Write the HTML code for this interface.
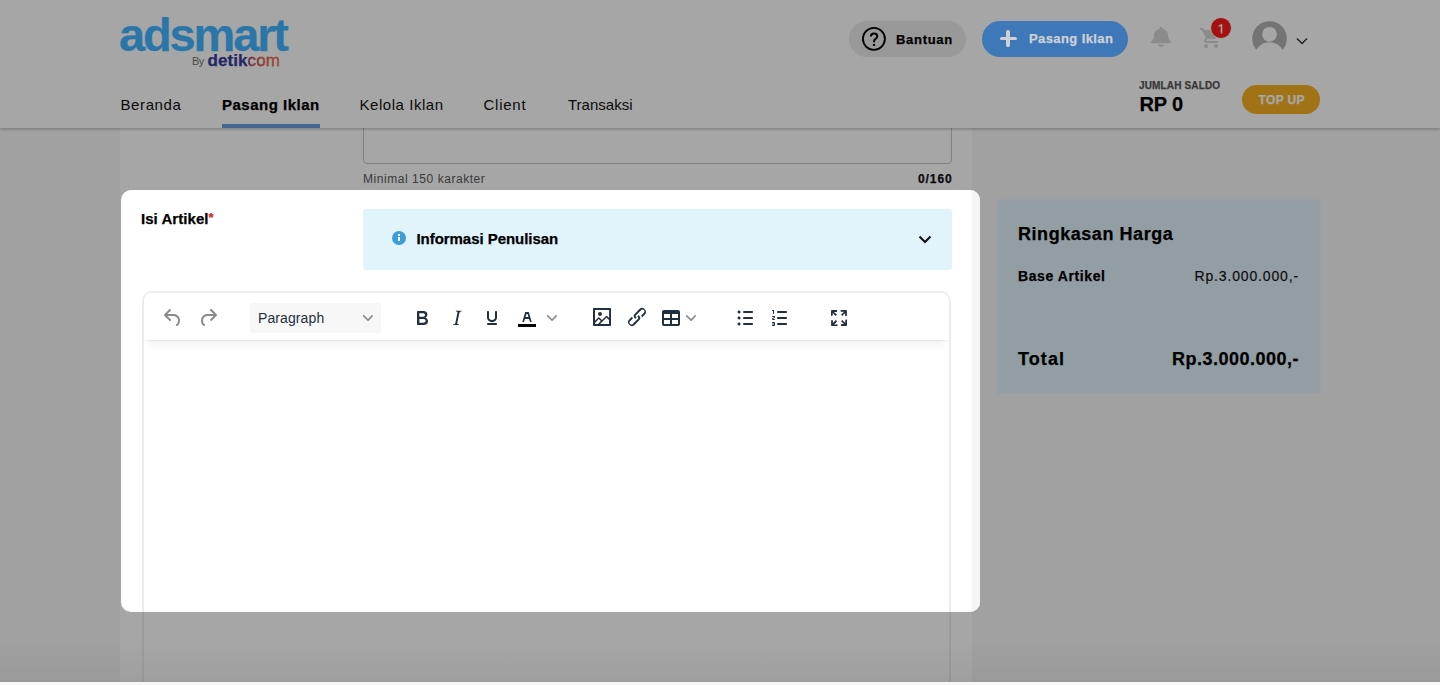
<!DOCTYPE html>
<html><head><meta charset="utf-8">
<style>
*{box-sizing:border-box;margin:0;padding:0}
html,body{width:1440px;height:685px;overflow:hidden}
body{background:#f7f7f7;font-family:"Liberation Sans",sans-serif;color:#000;position:relative}
.a{position:absolute;white-space:nowrap}
.t{position:absolute;white-space:nowrap;line-height:1}
.t[style*="font-weight:700"]{-webkit-text-stroke:.25px currentColor}
#header{position:absolute;left:0;top:0;width:1440px;height:128px;background:#fff;box-shadow:0 1.5px 2px rgba(0,0,0,.18);z-index:2}
#card{position:absolute;left:120px;top:128px;width:852px;height:557px;background:#fff}
#overlay{position:absolute;left:0;top:0;width:1440px;height:682px;background:rgba(0,0,0,.35);z-index:10}
#spot{position:absolute;left:121px;top:190px;width:859px;height:422px;border-radius:10px;overflow:hidden;background:#fff;z-index:11}
#footer{position:absolute;left:0;top:682px;width:1440px;height:3px;background:#f7f7f7;z-index:12}
svg{position:absolute;overflow:visible}
</style></head><body>

<div id="card">
  <div class="a" style="left:243px;top:-40px;width:589px;height:76px;border:1px solid #c7c7c7;border-radius:4px"></div>
  <div class="t" style="left:243px;top:44.7px;font-size:12px;color:#5a5a5a;letter-spacing:.55px">Minimal 150 karakter</div>
  <div class="t" style="left:798px;top:44.8px;font-size:12px;font-weight:700;color:#111;letter-spacing:.9px">0/160</div>
  <!-- editor part under overlay -->
  <div class="a" style="left:21.5px;top:163px;width:809px;height:600px;border:2px solid #efefef;border-radius:10px"></div>
</div>

<div id="header">
  <!-- Bantuan -->
  <div class="a" style="left:849px;top:21px;width:117px;height:36px;border-radius:18px;background:#ececec"></div>
  <svg style="left:862px;top:27px" width="24" height="24" viewBox="0 0 24 24"><circle cx="11.9" cy="11.85" r="11" fill="none" stroke="#000" stroke-width="1.9"/><path d="M8.9 9.6C8.9 7.7 10.3 6.4 12 6.4c1.8 0 3.3 1.2 3.3 2.9 0 1.5-1 2.2-2 2.8-.8.5-1.2.9-1.2 2.1v1" fill="none" stroke="#000" stroke-width="2"/><rect x="10.9" y="16.9" width="2.2" height="2" fill="#000"/></svg>
  <div class="t" style="left:896px;top:32.5px;font-size:13px;font-weight:700;letter-spacing:.7px">Bantuan</div>

  <!-- bell -->
  <svg style="left:1151px;top:27px" width="20" height="20" viewBox="0 0 448 512" preserveAspectRatio="none"><path fill="#d6d6d6" d="M224 512c35.3 0 64-28.7 64-64H160c0 35.3 28.7 64 64 64zm215.4-149.7c-19.3-20.8-55.5-52-55.5-154.3 0-77.7-54.5-139.900-127.9-155.2V32c0-17.7-14.3-32-32-32s-32 14.3-32 32v20.8C118.6 68.1 64.1 130.3 64.1 208c0 102.3-36.2 133.5-55.5 154.3-6 6.5-8.6 14.2-8.6 21.7.1 16.4 13 32 32.1 32h383.8c19.100 0 32-15.6 32.1-32 .1-7.5-2.6-15.3-8.6-21.7z"/></svg>
  <!-- cart -->
  <svg style="left:1199px;top:26px" width="24" height="24" viewBox="0 0 24 24"><path fill="#d6d6d6" d="M7 18c-1.1 0-1.99.9-1.99 2S5.9 22 7 22s2-.9 2-2-.9-2-2-2zM1 2v2h2l3.6 7.59-1.35 2.45c-.16.28-.25.61-.25.96 0 1.1.9 2 2 2h12v-2H7.42c-.14 0-.25-.11-.25-.25l.03-.12.9-1.63h7.45c.75 0 1.41-.41 1.75-1.03l3.58-6.49A1.003 1.003 0 0 0 20 4H5.21l-.94-2H1zm16 16c-1.1 0-1.99.9-1.99 2s.89 2 1.99 2 2-.9 2-2-.9-2-2-2z"/></svg>
  <div class="a" style="left:1210px;top:17.3px;width:22px;height:22px;border-radius:50%;background:#fb1b1b;border:1.3px solid #fff"></div>
  <svg style="left:1218px;top:23.8px" width="6" height="10" viewBox="0 0 6 10"><path d="M.6 1.6 3 .3h1.3v9.2H2.7V2.1L.6 3.1z" fill="#fff"/></svg>
  <!-- avatar -->
  <svg style="left:1251.5px;top:21.3px" width="36" height="36" viewBox="0 0 36 36">
    <circle cx="17.5" cy="17.6" r="17.3" fill="#b2b2b2"/>
    <circle cx="17.5" cy="13.3" r="7.4" fill="#fff"/><circle cx="17.5" cy="36.6" r="15.3" fill="#fff"/>
  </svg>
  <svg style="left:1296px;top:37px" width="12" height="8" viewBox="0 0 12 8"><path d="M1 1.5l5 5 5-5" fill="none" stroke="#333" stroke-width="1.5"/></svg>

  <!-- nav -->
  <div class="t" style="left:120.5px;top:96.6px;font-size:15px;color:#111;letter-spacing:.6px">Beranda</div>
  <div class="t" style="left:222px;top:96.6px;font-size:15px;font-weight:700;color:#000;letter-spacing:.5px">Pasang Iklan</div>
  <div class="t" style="left:359.5px;top:96.6px;font-size:15px;color:#111;letter-spacing:.55px">Kelola Iklan</div>
  <div class="t" style="left:483.5px;top:96.6px;font-size:15px;color:#111;letter-spacing:.75px">Client</div>
  <div class="t" style="left:568px;top:96.6px;font-size:15px;color:#111;letter-spacing:0px">Transaksi</div>
  <div class="a" style="left:222px;top:124px;width:98px;height:4px;background:#6aa0e0"></div>

  <!-- saldo -->
  <div class="t" style="left:1139px;top:80.8px;font-size:10px;font-weight:700;color:#555;letter-spacing:.15px">JUMLAH SALDO</div>
  <div class="t" style="left:1139.5px;top:94.3px;font-size:20px;font-weight:700;color:#000;letter-spacing:-.2px">RP 0</div>
  <div class="a" style="left:1242px;top:85px;width:78px;height:29px;border-radius:15px;background:#f9b023"></div>
  <div class="t" style="left:1258.5px;top:94px;font-size:12px;font-weight:700;color:#fff;letter-spacing:.35px">TOP UP</div>
</div>

<!-- ringkasan -->
<div class="a" style="left:997px;top:200px;width:323px;height:193px;background:#e0f2fc;filter:blur(1.5px)"></div>
<div class="t" style="left:1018px;top:224.6px;font-size:18px;font-weight:700;color:#000;letter-spacing:.55px">Ringkasan Harga</div>
<div class="t" style="left:1018px;top:269px;font-size:14px;font-weight:700;color:#000;letter-spacing:.6px">Base Artikel</div>
<div class="t" style="right:141px;top:269px;font-size:14px;color:#111;-webkit-text-stroke:.15px #111;letter-spacing:.85px">Rp.3.000.000,-</div>
<div class="t" style="left:1018px;top:349.6px;font-size:18px;font-weight:700;color:#000;letter-spacing:1.1px">Total</div>
<div class="t" style="right:141px;top:349.6px;font-size:18px;font-weight:700;color:#000;letter-spacing:.5px">Rp.3.000.000,-</div>

<div class="a" style="left:0;top:640px;width:1440px;height:42px;background:linear-gradient(rgba(0,0,0,0),rgba(0,0,0,.045));z-index:9"></div>
<div id="overlay"></div>
<div id="top" style="position:absolute;left:0;top:0;width:1440px;height:130px;z-index:11">
  <div class="t" style="left:119px;top:11px;font-size:47px;font-weight:700;color:#2b76a9;letter-spacing:-2.15px">adsmart</div>
  <div class="t" style="left:192px;top:56px;font-size:11px;color:#4a4a4a;letter-spacing:-.5px">By</div>
  <div class="t" style="left:207.5px;top:51.6px;font-size:17px;font-weight:700;color:#1f2766;letter-spacing:.05px">detik</div>
  <div class="t" style="left:247.5px;top:51.6px;font-size:17px;letter-spacing:.2px;-webkit-text-stroke:.3px #8a3c3c;background:linear-gradient(90deg,#5a2650,#9a4436 50%,#a85034);-webkit-background-clip:text;background-clip:text;color:transparent">com</div>
  <div class="a" style="left:982px;top:21px;width:146px;height:36px;border-radius:18px;background:#3f78b8"></div>
  <div class="a" style="left:999.5px;top:36.8px;width:17.5px;height:3.6px;border-radius:1.8px;background:#cfd0d6"></div>
  <div class="a" style="left:1006.4px;top:30px;width:3.6px;height:17px;border-radius:1.8px;background:#cfd0d6"></div>
  <div class="t" style="left:1029px;top:32.3px;font-size:13px;font-weight:700;color:#cfd0d6;letter-spacing:.4px">Pasang Iklan</div>
</div>


<div id="spot">
  <div class="a" style="left:851px;top:0;width:8px;height:422px;background:#f5f5f5"></div>
  <div class="t" style="left:20px;top:20.5px;font-size:15px;font-weight:700;color:#000;letter-spacing:.05px">Isi Artikel</div><div class="t" style="left:87.5px;top:21px;font-size:13px;font-weight:700;color:#e0262a">*</div>
  <!-- info box -->
  <div class="a" style="left:242px;top:19px;width:589px;height:61px;background:#e1f3fb;border-radius:3px"></div>
  <div class="a" style="left:270.8px;top:41.2px;width:14px;height:14px;border-radius:50%;background:#3d9dd6"></div>
  <div class="a" style="left:277.1px;top:46.6px;width:1.7px;height:4.6px;background:#fff"></div>
  <div class="a" style="left:277.1px;top:44.4px;width:1.7px;height:1.4px;background:#fff"></div>
  <div class="t" style="left:295.5px;top:41.2px;font-size:15px;font-weight:700;color:#000;letter-spacing:-.05px">Informasi Penulisan</div>
  <svg style="left:797px;top:45px" width="14" height="9" viewBox="0 0 14 9"><path d="M1.5 1.5l5.5 5.5 5.5-5.5" fill="none" stroke="#111" stroke-width="2"/></svg>

  <!-- editor -->
  <div class="a" style="left:20.5px;top:101px;width:809px;height:400px;border:2px solid #ececec;border-radius:10px"></div>
  <div class="a" style="left:22.5px;top:103px;width:805px;height:47px;background:#fff;border-radius:8px 8px 0 0;box-shadow:0 2px 2px -2px rgba(34,47,62,.2),0 8px 8px -4px rgba(34,47,62,.07)"></div>

  <div class="a" style="left:-121px;top:-190px;width:1440px;height:685px">
    <svg style="left:161px;top:305.5px" width="24" height="24" viewBox="0 0 24 24"><path fill="#8a8a8a" d="M6.4 8H12c3.7 0 6.2 2 6.8 5.1.6 2.7-.4 5.6-2.3 6.8a1 1 0 0 1-1-1.8c1.1-.6 1.8-2.7 1.4-4.6-.5-2.1-2.1-3.5-4.9-3.5H6.4l3.3 3.3a1 1 0 1 1-1.4 1.4l-5-5a1 1 0 0 1 0-1.4l5-5a1 1 0 0 1 1.4 1.4L6.4 8Z"/></svg>
    <svg style="left:196px;top:305.5px" width="24" height="24" viewBox="0 0 24 24"><path fill="#8a8a8a" d="M17.6 10H12c-2.8 0-4.4 1.4-4.9 3.5-.4 2 .3 4 1.4 4.6a1 1 0 1 1-1 1.8c-2-1.2-2.9-4.1-2.3-6.8.6-3 3-5.1 6.8-5.1h5.6l-3.3-3.3a1 1 0 1 1 1.4-1.4l5 5a1 1 0 0 1 0 1.4l-5 5a1 1 0 0 1-1.4-1.4l3.3-3.3Z"/></svg>
    <div class="a" style="left:250px;top:303px;width:131px;height:30px;background:#f7f7f7;border-radius:3px"></div>
    <div class="t" style="left:258px;top:311px;font-size:14px;color:#222f3e;letter-spacing:.1px">Paragraph</div>
    <svg style="left:363px;top:313px" width="10" height="10" viewBox="0 0 10 10"><path fill="#8a8a8a" d="M8.7 2.2c.3-.3.8-.3 1 0 .4.4.4.9 0 1.2L5.7 7.8c-.3.3-.9.3-1.2 0L.2 3.4a.8.8 0 0 1 0-1.2c.3-.3.8-.3 1.1 0L5 6l3.7-3.8Z"/></svg>
    <svg style="left:410px;top:305.6px" width="24" height="24" viewBox="0 0 24 24"><path fill="#222f3e" d="M7.8 19c-.3 0-.5 0-.6-.2l-.2-.5V5.7c0-.2 0-.4.2-.5l.6-.2h5c1.5 0 2.7.3 3.5 1 .7.6 1.1 1.4 1.1 2.5a3 3 0 0 1-.6 1.9c-.4.6-1 1-1.6 1.2.4.1.9.3 1.300.6s.8.7 1 1.2c.4.4.5 1 .5 1.6 0 1.3-.4 2.3-1.3 3-.8.7-2.1 1-3.8 1H7.8Zm5-8.3c.6 0 1.2-.1 1.6-.5.4-.3.6-.7.6-1.3 0-1.1-.8-1.7-2.3-1.7H9.3v3.5h3.4Zm.5 6c.7 0 1.3-.1 1.700-.4.4-.4.6-.9.6-1.5s-.2-1-.7-1.4c-.4-.3-1-.4-2-.4H9.4v3.8h4Z"/></svg>
    <svg style="left:445px;top:305.6px" width="24" height="24" viewBox="0 0 24 24"><path fill="#222f3e" d="m16.7 4.7-.1.9h-.3c-.6 0-1 0-1.4.3-.3.3-.4.6-.5 1.100l-2.1 9.8v.6c0 .5.4.8 1.4.8h.2l-.2.8H8l.2-.8h.2c1.1 0 1.8-.5 2-1.5l2-9.8.1-.5c0-.6-.4-.8-1.4-.8h-.3l.2-.9h5.8Z"/></svg>
    <svg style="left:480px;top:305.6px" width="24" height="24" viewBox="0 0 24 24"><path fill="#222f3e" d="M16 5c.6 0 1 .4 1 1v5.5a4 4 0 0 1-.4 1.8l-1 1.4a5.3 5.3 0 0 1-5.5 1 5 5 0 0 1-1.6-1c-.5-.4-.8-.9-1.1-1.4a4 4 0 0 1-.4-1.8V6c0-.6.4-1 1-1s1 .4 1 1v5.5c0 .3 0 .6.2 1l.6.7a3.3 3.3 0 0 0 2.2.8 3.4 3.4 0 0 0 2.2-.8c.3-.2.4-.5.6-.8l.2-.9V6c0-.6.4-1 1-1ZM8 17h8c.6 0 1 .4 1 1s-.4 1-1 1H8a1 1 0 0 1 0-2Z"/></svg>
    <svg style="left:515px;top:305.5px" width="24" height="24" viewBox="0 0 24 24"><path fill="#000" d="M3 18h18v3H3z"/><path fill="#222f3e" d="M8.7 16h-.8a.5.5 0 0 1-.5-.6l2.7-9c.1-.3.3-.4.5-.4h2.8c.2 0 .4.1.5.4l2.7 9a.5.5 0 0 1-.5.6h-.8a.5.5 0 0 1-.4-.4l-.7-2.2c0-.3-.3-.4-.5-.4h-3.400c-.2 0-.4.1-.5.4l-.7 2.2c0 .3-.2.4-.4.4Zm2.6-7.6-.6 2a.5.5 0 0 0 .5.6h1.6a.5.5 0 0 0 .5-.6l-.6-2c0-.3-.3-.4-.5-.4h-.4c-.2 0-.4.1-.5.4Z"/></svg>
    <svg style="left:547px;top:313px" width="10" height="10" viewBox="0 0 10 10"><path fill="#8a8a8a" d="M8.7 2.2c.3-.3.8-.3 1 0 .4.4.4.9 0 1.2L5.7 7.8c-.3.3-.9.3-1.2 0L.2 3.4a.8.8 0 0 1 0-1.2c.3-.3.8-.3 1.1 0L5 6l3.7-3.8Z"/></svg>
    <svg style="left:590px;top:305.2px" width="24" height="24" viewBox="0 0 24 24"><path fill="#222f3e" d="M5 15.7l3.3-3.2c.3-.3.7-.3 1 0L12 15l4.1-4c.3-.4.8-.4 1 0l2 1.9V5H5v10.7zM5 18V19h3l2.8-2.9-2-2L5 17.9zm14-3l-2.5-2.4-6.4 6.5H19v-4zM4 3h16c.6 0 1 .4 1 1v16c0 .6-.4 1-1 1H4a1 1 0 0 1-1-1V4c0-.6.4-1 1-1zm6 8a2 2 0 1 1 0-4 2 2 0 0 1 0 4z"/></svg>
    <svg style="left:625px;top:305.3px" width="24" height="24" viewBox="0 0 24 24"><path fill="#222f3e" d="M6.2 12.3a1 1 0 0 1 1.4 1.4l-2 2a2 2 0 1 0 2.6 2.8l4.8-4.8a1 1 0 0 0 0-1.4 1 1 0 1 1 1.4-1.3 2.9 2.9 0 0 1 0 4L9.6 20a3.900 3.900 0 0 1-5.5-5.5l2-2zm11.6-.6a1 1 0 0 1-1.4-1.4l2-2a2 2 0 1 0-2.6-2.800L11 10.3a1 1 0 0 0 0 1.4A1 1 0 1 1 9.6 13a2.9 2.9 0 0 1 0-4L14.4 4a3.9 3.9 0 0 1 5.5 5.5l-2 2z"/></svg>
    <svg style="left:659px;top:305.5px" width="24" height="24" viewBox="0 0 24 24"><path fill="#222f3e" d="M19 4a2 2 0 0 1 2 2v12a2 2 0 0 1-2 2H5a2 2 0 0 1-2-2V6c0-1.1.9-2 2-2h14Zm0 10h-6v4h6v-4Zm-8 0H5v4h6v-4Zm8-6h-6v4h6V8Zm-8 0H5v4h6V8Z"/></svg>
    <svg style="left:686px;top:313px" width="10" height="10" viewBox="0 0 10 10"><path fill="#8a8a8a" d="M8.7 2.2c.3-.3.8-.3 1 0 .4.4.4.9 0 1.2L5.7 7.8c-.3.3-.9.3-1.2 0L.2 3.4a.8.8 0 0 1 0-1.2c.3-.3.8-.3 1.1 0L5 6l3.7-3.8Z"/></svg>
    <svg style="left:733px;top:305.6px" width="24" height="24" viewBox="0 0 24 24"><path fill="#222f3e" d="M11 5h8c.6 0 1 .4 1 1s-.4 1-1 1h-8a1 1 0 0 1 0-2zm0 6h8c.6 0 1 .4 1 1s-.4 1-1 1h-8a1 1 0 0 1 0-2zm0 6h8c.6 0 1 .4 1 1s-.4 1-1 1h-8a1 1 0 0 1 0-2zM4.5 6c0-.4.1-.8.4-1 .3-.4.7-.5 1.1-.5.4 0 .8.1 1 .4.4.3.5.7.5 1.1 0 .4-.1.8-.4 1-.3.4-.7.5-1.1.5-.4 0-.8-.1-1-.4-.4-.3-.5-.7-.5-1.1zm0 6c0-.4.1-.8.4-1 .3-.4.7-.5 1.1-.5.4 0 .8.1 1 .4.4.3.5.7.5 1.1 0 .4-.1.8-.4 1-.3.4-.7.5-1.1.5-.4 0-.8-.1-1-.4-.4-.3-.5-.7-.5-1.1zm0 6c0-.4.1-.8.4-1 .3-.4.7-.5 1.1-.5.4 0 .8.1 1 .4.4.3.5.7.5 1.1 0 .4-.1.8-.4 1-.3.4-.7.5-1.1.5-.4 0-.8-.1-1-.4-.4-.3-.5-.7-.5-1.100z"/></svg>
    <svg style="left:768px;top:305.6px" width="24" height="24" viewBox="0 0 24 24"><path fill="#222f3e" d="M10 17h8c.6 0 1 .4 1 1s-.4 1-1 1h-8a1 1 0 0 1 0-2zm0-6h8c.6 0 1 .4 1 1s-.4 1-1 1h-8a1 1 0 0 1 0-2zm0-6h8c.6 0 1 .4 1 1s-.4 1-1 1h-8a1 1 0 1 1 0-2zM6 4v3.5c0 .3-.2.5-.5.5a.5.5 0 0 1-.5-.5V5h-.5a.5.5 0 0 1 0-1H6zm-1 8.8l.2.2h1.3c.3 0 .5.2.5.5s-.2.5-.5.5H4.9a1 1 0 0 1-.9-1V13c0-.4.3-.8.6-1l1.2-.4.2-.3a.2.2 0 0 0-.2-.2H4.5a.5.5 0 0 1-.5-.5c0-.3.2-.5.5-.5h1.6c.5 0 .9.4.9 1v.1c0 .4-.3.8-.6 1l-1.2.4-.2.3zM7 17v2c0 .6-.4 1-1 1H4.5a.5.5 0 0 1 0-1h1.2c.2 0 .3-.1.3-.3 0-.2-.1-.3-.3-.3H4.4a.4.4 0 1 1 0-.8h1.3c.2 0 .3-.1.3-.3 0-.2-.1-.3-.3-.3H4.5a.5.5 0 1 1 0-1H6c.6 0 1 .4 1 1v1l-.1.5.1.5z"/></svg>
    <svg style="left:827px;top:305.6px" width="24" height="24" viewBox="0 0 24 24"><path fill="#222f3e" d="m15.3 10-1.2-1.3 2.9-3h-2.3a.9.9 0 1 1 0-1.7H19c.5 0 .9.4.9.9v4.4a.9.9 0 1 1-1.8 0V7l-2.9 3Zm0 4 3 3v-2.3a.9.9 0 1 1 1.7 0V19c0 .5-.4.9-.9.9h-4.4a.9.9 0 1 1 0-1.8H17l-3-2.9 1.3-1.2ZM10 15.4l-2.9 3h2.3a.9.9 0 1 1 0 1.7H5a.9.9 0 0 1-.9-.9v-4.4a.9.9 0 1 1 1.8 0V17l2.9-3 1.2 1.3ZM8.7 10 5.7 7v2.3a.9.9 0 0 1-1.7 0V5c0-.5.4-.9.9-.9h4.4a.9.9 0 0 1 0 1.8H7l3 2.9-1.3 1.2Z"/></svg>
  </div>
</div>

<div id="footer"></div>
</body></html>
